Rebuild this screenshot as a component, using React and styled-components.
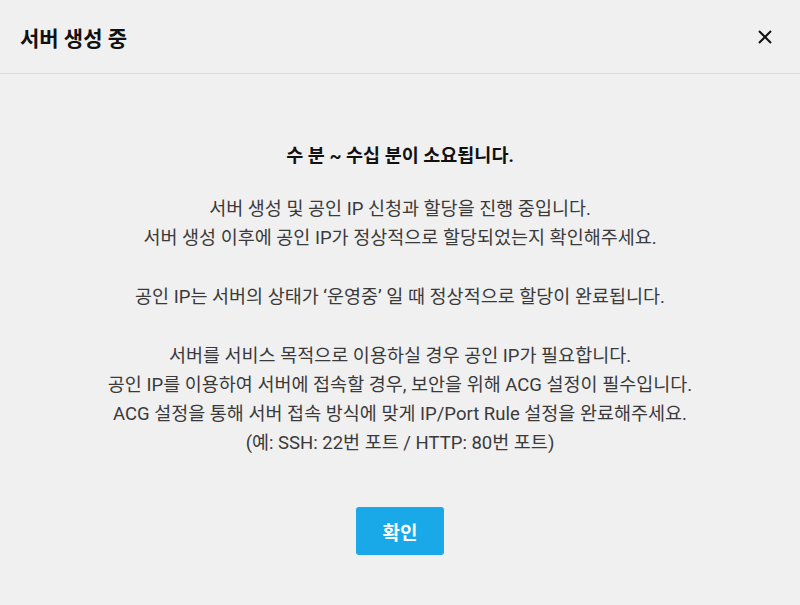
import React from "react";
import styled, { createGlobalStyle } from "styled-components";

const Global = createGlobalStyle`
  html, body { margin: 0; padding: 0; background: #f0f0f0; }
  body { font-family: Roboto, "Noto Sans CJK KR", sans-serif; }
`;

const Modal = styled.div`
  width: 800px;
  height: 605px;
  background: #f0f0f0;
  display: flex;
  flex-direction: column;
`;

const Header = styled.div`
  height: 74px;
  box-sizing: border-box;
  border-bottom: 1px solid #dcdcdc;
  display: flex;
  align-items: center;
  justify-content: space-between;
  padding: 0 25px 0 20px;
`;

const Title = styled.h1`
  margin: 0;
  font-size: 21px;
  font-weight: 700;
  color: #111;
`;

const CloseButton = styled.button`
  border: 0;
  background: transparent;
  padding: 0;
  width: 20px;
  height: 20px;
  display: flex;
  align-items: center;
  justify-content: center;
  cursor: pointer;
`;

const Body = styled.div`
  display: flex;
  flex-direction: column;
  align-items: center;
  padding-top: 68px;
`;

const Lead = styled.p`
  margin: 0 0 24px;
  font-size: 18.5px;
  font-weight: 700;
  color: #111;
  line-height: 29px;
`;

const Para = styled.p`
  margin: 0 0 30px;
  font-size: 18.5px;
  color: #3a3a3a;
  line-height: 29px;
  text-align: center;
`;

const ConfirmButton = styled.button`
  margin-top: 19px;
  width: 88px;
  height: 48px;
  border: 0;
  border-radius: 3px;
  background: #1aa9e8;
  color: #fff;
  font-family: Roboto, "Noto Sans CJK KR", sans-serif;
  font-size: 19px;
  font-weight: 700;
  cursor: pointer;
`;

export default function App() {
  return (
    <>
      <Global />
      <Modal>
        <Header>
          <Title>서버 생성 중</Title>
          <CloseButton aria-label="닫기">
            <svg width="16" height="16" viewBox="0 0 16 16">
              <path d="M2 2 L14 14 M14 2 L2 14" stroke="#111" strokeWidth="2" />
            </svg>
          </CloseButton>
        </Header>
        <Body>
          <Lead>수 분 ~ 수십 분이 소요됩니다.</Lead>
          <Para>
            서버 생성 및 공인 IP 신청과 할당을 진행 중입니다.
            <br />
            서버 생성 이후에 공인 IP가 정상적으로 할당되었는지 확인해주세요.
          </Para>
          <Para>공인 IP는 서버의 상태가 ‘운영중’ 일 때 정상적으로 할당이 완료됩니다.</Para>
          <Para>
            서버를 서비스 목적으로 이용하실 경우 공인 IP가 필요합니다.
            <br />
            공인 IP를 이용하여 서버에 접속할 경우, 보안을 위해 ACG 설정이 필수입니다.
            <br />
            ACG 설정을 통해 서버 접속 방식에 맞게 IP/Port Rule 설정을 완료해주세요.
            <br />
            (예: SSH: 22번 포트 / HTTP: 80번 포트)
          </Para>
          <ConfirmButton>확인</ConfirmButton>
        </Body>
      </Modal>
    </>
  );
}
